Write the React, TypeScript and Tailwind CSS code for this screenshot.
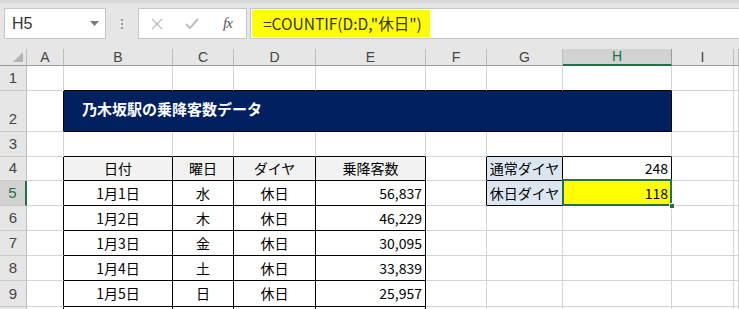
import React from 'react'

const COLS = ['A', 'B', 'C', 'D', 'E', 'F', 'G', 'H', 'I', '']
const ROW_H = ['h-[25px]', 'h-[41px]', 'h-[25px]', 'h-[24px]', 'h-[25px]', 'h-[25px]', 'h-[25px]', 'h-[25px]', 'h-[26px]', 'h-[25px]']

const jp = "font-['Noto_Sans_CJK_JP',sans-serif]"

type C = { t?: string; a?: 'l' | 'c' | 'r'; bg?: string; span?: number; sel?: boolean }

const data = [
  ['1月1日', '水', '休日', '56,837'],
  ['1月2日', '木', '休日', '46,229'],
  ['1月3日', '金', '休日', '30,095'],
  ['1月4日', '土', '休日', '33,839'],
  ['1月5日', '日', '休日', '25,957'],
  ['', '', '', ''],
]

// which cells carry a black right / bottom border (row 1-based, col 0 = A)
const blackRight = (r: number, c: number) => {
  if (r === 2 && (c === 0 || c === 7)) return true
  if (r >= 4 && c >= 0 && c <= 4) return true
  if ((r === 4 || r === 5) && c >= 5 && c <= 7) return true
  return false
}
const blackBottom = (r: number, c: number) => {
  if (r === 1 && c >= 1 && c <= 7) return true
  if (r === 2 && c >= 1 && c <= 7) return true
  if (r === 3 && c >= 1 && c <= 7 && c !== 5) return true
  if (r >= 4 && c >= 1 && c <= 4) return true
  if ((r === 4 || r === 5) && (c === 6 || c === 7)) return true
  return false
}

const rowCells = (r: number): Record<number, C> => {
  if (r === 2) return { 1: { t: '乃木坂駅の乗降客数データ', span: 7, bg: 'title' } }
  if (r === 4)
    return {
      1: { t: '日付', a: 'c', bg: 'head' },
      2: { t: '曜日', a: 'c', bg: 'head' },
      3: { t: 'ダイヤ', a: 'c', bg: 'head' },
      4: { t: '乗降客数', a: 'c', bg: 'head' },
      6: { t: '通常ダイヤ', a: 'c', bg: 'blue' },
      7: { t: '248', a: 'r' },
    }
  if (r >= 5) {
    const d = data[r - 5]
    const out: Record<number, C> = {
      1: { t: d[0], a: 'c' },
      2: { t: d[1], a: 'c' },
      3: { t: d[2], a: 'c' },
      4: { t: d[3], a: 'r' },
    }
    if (r === 5) {
      out[6] = { t: '休日ダイヤ', a: 'c', bg: 'blue' }
      out[7] = { t: '118', a: 'r', bg: 'yellow', sel: true }
    }
    return out
  }
  return {}
}

const Cell = ({ r, c, cell }: { r: number; c: number; cell?: C }) => {
  const span = cell?.span ?? 1
  const lastCol = c + span - 1
  const right = blackRight(r, lastCol) ? 'border-r-black' : 'border-r-[#d4d4d4]'
  const bottom = blackBottom(r, c) ? 'border-b-black' : 'border-b-[#d4d4d4]'
  const bg =
    cell?.bg === 'title'
      ? 'bg-[#002060] text-white font-bold text-[15px] pl-[18px] pb-[3px]'
      : cell?.bg === 'head'
        ? 'bg-[#f2f2f2]'
        : cell?.bg === 'blue'
          ? 'bg-[#dce6f1]'
          : cell?.bg === 'yellow'
            ? 'bg-[#ffff00]'
            : 'bg-white'
  const align = cell?.a === 'c' ? 'justify-center' : cell?.a === 'r' ? 'justify-end pr-[3px]' : ''
  const spanCls = span === 7 ? 'col-span-7' : ''
  return (
    <div
      className={`relative flex items-center whitespace-nowrap border-r border-b text-[14px] text-black ${jp} ${right} ${bottom} ${bg} ${align} ${spanCls}`}
    >
      {cell?.t}
      {cell?.sel && (
        <>
          <div className="absolute -top-[2px] -left-[1px] -right-[1px] -bottom-[1px] border-2 border-[#217346] z-10" />
          <div className="absolute -right-[4px] -bottom-[4px] w-[6px] h-[6px] bg-[#217346] border border-white z-20" />
        </>
      )}
    </div>
  )
}

const Toolbar = () => (
  <div className="h-[49px] bg-[#e6e6e6] relative">
    <div className="h-[3px] bg-[#d8d8d8]" />
    <div className="flex items-start pt-[5px]">
      <div className="ml-[4px] w-[102px] h-[31px] bg-white border border-[#c6c6c6] flex items-center justify-between pl-[7px] pr-[6px]">
        <span className="text-[16px] text-[#333] font-['Liberation_Sans',sans-serif]">H5</span>
        <svg width="9" height="5" viewBox="0 0 9 5">
          <path d="M0 0 L9 0 L4.5 5 Z" fill="#7a7a7a" />
        </svg>
      </div>
      <div className="w-[32px] h-[31px] flex flex-col items-center justify-center gap-[2px]">
        <span className="w-[2px] h-[2px] bg-[#9a9a9a]" />
        <span className="w-[2px] h-[2px] bg-[#9a9a9a]" />
        <span className="w-[2px] h-[2px] bg-[#9a9a9a]" />
      </div>
      <div className="w-[109px] h-[31px] bg-white border border-[#c6c6c6] flex items-center pl-[12px]">
        <svg width="12" height="12" viewBox="0 0 12 12">
          <path d="M1 1 L11 11 M11 1 L1 11" stroke="#bdbdbd" strokeWidth="1.4" />
        </svg>
        <svg width="14" height="11" viewBox="0 0 14 11" className="ml-[22px]">
          <path d="M1 6 L5 10 L13 1" stroke="#bdbdbd" strokeWidth="2" fill="none" />
        </svg>
        <span className="ml-[24px] italic text-[15px] text-[#555] font-['Liberation_Serif',serif] tracking-[-1px]">
          fx
        </span>
      </div>
      <div className="ml-[3px] flex-1 h-[31px] bg-white border-t border-b border-l border-[#c6c6c6] flex items-stretch py-[1px] pl-[1px]">
        <div className={`w-[178px] bg-[#ffff00] flex items-center pl-[11px] text-[15.5px] text-[#333] ${jp}`}>
          =COUNTIF(D:D,"休日")
        </div>
      </div>
    </div>
  </div>
)

export default function App() {
  return (
    <div className="w-[739px] h-[309px] overflow-hidden bg-[#e6e6e6] select-none">
      <Toolbar />
      <div className="grid grid-cols-[27px_37px_109px_61px_82px_110px_61px_76px_109px_62px_1fr]">
        {/* column headers */}
        <div className="h-[17px] relative border-r border-b border-r-[#bcbcbc] border-b-[#9b9b9b] bg-[#e6e6e6]">
          <svg width="10" height="10" viewBox="0 0 10 10" className="absolute right-[3px] bottom-[3px]">
            <path d="M10 0 L10 10 L0 10 Z" fill="#b4b4b4" />
          </svg>
        </div>
        {COLS.map((c) =>
          c === 'H' ? (
            <div
              key={c}
              className="h-[17px] flex items-center justify-center border-r border-r-[#9b9b9b] border-b-2 border-b-[#217346] bg-[#d2d2d2] text-[#217346] text-[14px] font-['Liberation_Sans',sans-serif]"
            >
              {c}
            </div>
          ) : (
            <div
              key={c || 'x'}
              className="h-[17px] flex items-center justify-center border-r border-b border-r-[#bcbcbc] border-b-[#9b9b9b] bg-[#e6e6e6] text-[#444] text-[14px] font-['Liberation_Sans',sans-serif]"
            >
              {c}
            </div>
          ),
        )}
        {ROW_H.map((h, i) => {
          const r = i + 1
          const cells = rowCells(r)
          const items: React.ReactNode[] = []
          const label = r < 10 ? r : ''
          items.push(
            r === 5 ? (
              <div
                key={`h${r}`}
                className={`${h} flex items-end justify-center pb-[1px] border-r-2 border-b border-r-[#217346] border-b-[#c8c8c8] bg-[#d2d2d2] text-[#217346] text-[15px] font-['Liberation_Sans',sans-serif]`}
              >
                {label}
              </div>
            ) : (
              <div
                key={`h${r}`}
                className={`${h} flex items-end justify-center pb-[1px] border-r border-b border-r-[#bcbcbc] border-b-[#c8c8c8] bg-[#e6e6e6] text-[#444] text-[15px] font-['Liberation_Sans',sans-serif]`}
              >
                {label}
              </div>
            ),
          )
          let c = 0
          while (c < COLS.length) {
            const cell = cells[c]
            items.push(<Cell key={`${r}-${c}`} r={r} c={c} cell={cell} />)
            c += cell?.span ?? 1
          }
          return items
        })}
      </div>
    </div>
  )
}
